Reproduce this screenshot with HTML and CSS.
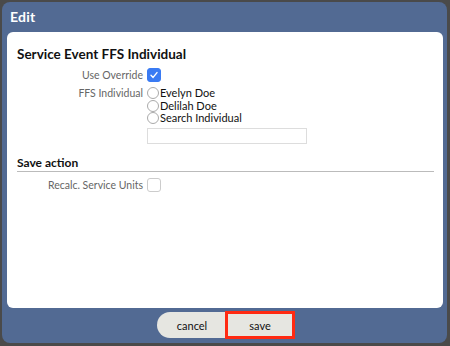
FILE: index.html
```html
<!DOCTYPE html>
<html lang="en">

<head>
    <meta charset="UTF-8">
    <meta name="viewport" content="width=device-width, initial-scale=1.0">
    <title>Edit</title>
    <link rel="stylesheet" href="styles.css">
</head>

<body>
    <div class="dialog">
        <div class="dialog-title">Edit</div>
        <div class="dialog-body">
            <h2 class="section-title">Service Event FFS Individual</h2>
            <div class="form-row">
                <span class="label">Use Override</span>
                <span class="checkbox checked">
                    <svg width="10" height="10" viewBox="0 0 10 10"><path d="M2 5.3 L4.1 7.4 L8 2.6" fill="none" stroke="#fff" stroke-width="1.4" stroke-linecap="round" stroke-linejoin="round"/></svg>
                </span>
            </div>
            <div class="form-row ffs-row">
                <span class="label">FFS Individual</span>
                <div class="options">
                    <label class="option"><span class="radio"></span>Evelyn Doe</label>
                    <label class="option"><span class="radio"></span>Delilah Doe</label>
                    <label class="option"><span class="radio"></span>Search Individual</label>
                    <div class="text-input"></div>
                </div>
            </div>
            <h3 class="sub-title">Save action</h3>
            <div class="form-row">
                <span class="label">Recalc. Service Units</span>
                <span class="checkbox"></span>
            </div>
        </div>
        <div class="dialog-footer">
            <button class="btn btn-cancel">cancel</button>
            <button class="btn btn-save">save</button>
        </div>
    </div>
</body>

</html>
```

FILE: styles.css
```css
body {
    margin: 0;
    background-color: #4a4a4a;
    font-family: Lato, "Open Sans", sans-serif;
    height: 346px;
    overflow: hidden;
}

.dialog {
    margin: 2px 3px 0 2px;
    height: 341px;
    background-color: #526a93;
    border-radius: 8px;
    display: flex;
    flex-direction: column;
    padding: 0 4px 0 5px;
    box-sizing: border-box;
}

.dialog-title {
    color: #fff;
    font-size: 14px;
    font-weight: bold;
    height: 30px;
    line-height: 30px;
    padding-left: 3px;
    letter-spacing: 0.2px;
}

.dialog-body {
    background-color: #fff;
    border-radius: 6px;
    height: 276px;
    padding: 13px 9px 0 10px;
    box-sizing: border-box;
}

.section-title {
    margin: 0 0 5px;
    font-size: 13.5px;
    font-weight: bold;
    color: #111;
    line-height: 18px;
}

.form-row {
    display: grid;
    grid-template-columns: 126px 1fr;
    column-gap: 4px;
    font-size: 11px;
    line-height: 12.5px;
    margin-top: 2px;
}

.label {
    text-align: right;
    color: #666;
    font-size: 10.5px;
    line-height: 14px;
}

.ffs-row {
    margin-top: 5px;
}

.ffs-row .label {
    line-height: 12.5px;
}

.checkbox {
    width: 14px;
    height: 14px;
    border: 1px solid #ccc;
    border-radius: 3px;
    box-sizing: border-box;
    display: flex;
    align-items: center;
    justify-content: center;
}

.checkbox.checked {
    background-color: #3a7bf3;
    border-color: #3a7bf3;
}

.options {
    display: flex;
    flex-direction: column;
}

.option {
    display: flex;
    align-items: center;
    color: #111;
    height: 12.5px;
}

.radio {
    width: 12px;
    height: 12px;
    border: 1px solid #aaa;
    border-radius: 50%;
    box-sizing: border-box;
    margin-right: 1px;
}

.text-input {
    width: 160px;
    height: 16px;
    border: 1px solid #ddd;
    box-sizing: border-box;
    margin-top: 3px;
}

.sub-title {
    margin: 12px 0 0;
    padding-bottom: 2px;
    font-size: 12px;
    font-weight: bold;
    color: #111;
    line-height: 13px;
    border-bottom: 1px solid #bbb;
}

.sub-title + .form-row {
    margin-top: 6px;
}

.dialog-footer {
    display: flex;
    justify-content: center;
    align-items: center;
    padding: 3px 0 0 2px;
}

.btn {
    font-family: Lato, "Open Sans", sans-serif;
    font-size: 11px;
    color: #111;
    background-color: #e6e6e1;
    border: none;
    height: 26px;
    padding: 0;
    cursor: pointer;
}

.btn-cancel {
    width: 70px;
    border-radius: 13px 0 0 13px;
}

.btn-save {
    width: 70px;
    height: 28px;
    border: 3px solid #ff2a12;
    margin-left: -2px;
}
```
